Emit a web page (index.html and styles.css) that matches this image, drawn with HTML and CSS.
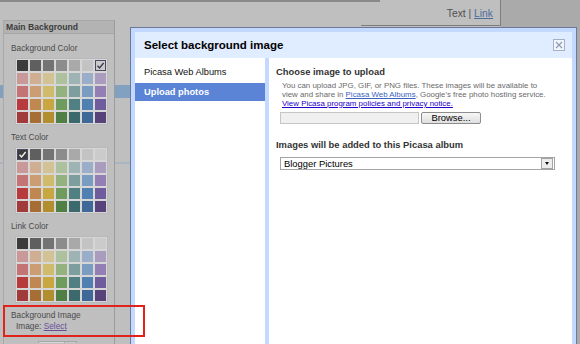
FILE: index.html
```html
<!DOCTYPE html>
<html lang="en">
<head>
  <meta charset="UTF-8" />
  <title>Template Designer - Background</title>
  <link rel="stylesheet" href="styles.css">
</head>
<body>

  <div class="page">
    <div class="sidebar">
      <div class="panel-title">Main Background</div>
      <div class="label">Background Color</div>
      <div class="swatches" data-selected="6"></div>
      <div class="label">Text Color</div>
      <div class="swatches" data-selected="0"></div>
      <div class="label">Link Color</div>
      <div class="swatches"></div>
      <div class="bg-image">
        <div>Background Image</div>
        <div class="bg-image-row">Image: <a href="#">Select</a></div>
      </div>
      <div class="pos-row"><span class="pos-box"></span><span class="pos-btn"></span></div>
    </div>

    <div class="main">
      <div class="main-head">
        <div class="tabs">Text | <a href="#">Link</a></div>
      </div>
    </div>

    <div class="preview"></div>
  </div>

  <div class="highlight"></div>

  <!-- Dialogo -->
  <div class="dialog">
    <div class="dialog-head">
      <h2>Select background image</h2>
      <span class="close">
        <svg width="8" height="8" viewBox="0 0 8 8"><path d="M1 1L7 7M7 1L1 7" stroke="#8d9bb5" stroke-width="1.2"/></svg>
      </span>
    </div>
    <div class="dialog-body">
      <ul class="nav">
        <li>Picasa Web Albums</li>
        <li class="active">Upload photos</li>
      </ul>
      <div class="upload">
        <h3>Choose image to upload</h3>
        <p class="note">You can upload JPG, GIF, or PNG files. These images will be available to<br>view and share in <a href="#">Picasa Web Albums</a>, Google's free photo hosting service.<br><a href="#" class="policy">View Picasa program policies and privacy notice.</a></p>
        <div class="file-row">
          <span class="file-box"></span>
          <button class="browse">Browse...</button>
        </div>
        <h3 class="album-title">Images will be added to this Picasa album</h3>
        <div class="album-select">
          <span>Blogger Pictures</span>
          <span class="arrow"></span>
        </div>
      </div>
    </div>
  </div>

  <script>
    const palette = [
      ['#3b3b3b', '#5f5f5f', '#737373', '#8c8c8c', '#a9a9a9', '#c3c3c3', '#cbcbcb'],
      ['#c9999a', '#cfae91', '#d3c394', '#adc19f', '#9eb4b4', '#9aaec9', '#a99cbf'],
      ['#c57476', '#cc9c72', '#d0bb6a', '#93b27e', '#7c9e9f', '#7b9cc1', '#937fb3'],
      ['#b73b3c', '#c08751', '#c8a640', '#6f9c5c', '#508082', '#5080b1', '#6f5c9c'],
      ['#a03a3b', '#a66d35', '#b18f2e', '#4f7f44', '#3c6a6c', '#3d6897', '#574279']
    ];

    document.querySelectorAll('.swatches').forEach(grid => {
      const selected = grid.dataset.selected;
      palette.forEach((row, r) => {
        row.forEach((color, c) => {
          const cell = document.createElement('div');
          cell.className = 'swatch';
          cell.style.background = color;
          if (r === 0 && String(c) === selected) {
            cell.classList.add('on');
            const stroke = c === 0 ? '#f2f2f2' : '#3c3a50';
            cell.innerHTML = '<svg width="9" height="9" viewBox="0 0 9 9"><path d="M1.5 4.8L3.6 7L7.6 2" fill="none" stroke="' + stroke + '" stroke-width="1.4"/></svg>';
          }
          grid.appendChild(cell);
        });
      });
    });
  </script>

</body>
</html>
```

FILE: styles.css
```css
body {
  margin: 0;
  font-family: "Liberation Sans", Arial, sans-serif;
  background-color: #bfbfbf;
  overflow: hidden;
}
.page {
  display: flex;
  height: 344px;
  overflow: hidden;
  background:
    linear-gradient(#8a8a8a, #8a8a8a) no-repeat 0 0 / 380px 2px,
    linear-gradient(#82a0bf, #82a0bf) no-repeat 0 85px / 100% 13px,
    linear-gradient(#a9b5c2, #a9b5c2) no-repeat 0 162px / 100% 2px,
    #bfbfbf;
}
.sidebar {
  box-sizing: border-box;
  width: 112px;
  margin: 20px 0 0 3px;
  overflow: hidden;
  background-color: #bfbfbf;
  border-left: 1px solid #a9a9a9;
  border-right: 1px solid #9c9c9c;
  color: #4a4a4a;
}
.panel-title {
  height: 12px;
  line-height: 12px;
  padding-left: 2px;
  background-color: #b3b3b3;
  border-top: 1px solid #a6a6a6;
  border-bottom: 1px solid #a6a6a6;
  font-size: 8.6px;
  font-weight: bold;
  color: #3d3d3d;
}
.label {
  margin-top: 8px;
  padding-left: 7px;
  line-height: 12px;
  font-size: 8.3px;
}
.swatches + .label {
  margin-top: 6px;
}
.swatches {
  display: grid;
  grid-template-columns: repeat(7, 11px);
  grid-auto-rows: 11px;
  gap: 2px;
  width: max-content;
  margin: 4px 0 0 11px;
  padding: 1px;
  background-color: #d6d6d6;
  border: 1px solid #b8b8b8;
}
.swatch {
  display: flex;
  align-items: center;
  justify-content: center;
}
.swatch.on {
  box-sizing: border-box;
  border: 1px solid #4b4862;
}
.bg-image {
  margin-top: 7px;
  padding-left: 7px;
  font-size: 8.3px;
  line-height: 11px;
}
.bg-image-row {
  padding-left: 5px;
}
.bg-image-row a {
  color: #6b4f9c;
}
.pos-row {
  display: flex;
  margin: 9px 0 0 34px;
}
.pos-box {
  width: 25px;
  height: 1px;
  background-color: #d9d9d9;
  border: 1px solid #a5a5a5;
  border-bottom: none;
}
.pos-btn {
  width: 11px;
  height: 1px;
  background-color: #c9c9c9;
  border: 1px solid #a5a5a5;
  border-left: none;
  border-bottom: none;
}
.main {
  width: 386px;
}
.main-head {
  display: flex;
  justify-content: flex-end;
}
.tabs {
  height: 26px;
  padding: 8px 7px 0 0;
  box-sizing: border-box;
  border-right: 1px solid #7d7d7d;
  border-bottom: 1px solid #7d7d7d;
  width: 140px;
  text-align: right;
  font-size: 10.3px;
  line-height: 12px;
  color: #505050;
}
.tabs a {
  color: #4d6d9b;
}
.preview {
  flex: 1;
  background-color: #aaaaaa;
}
.highlight {
  position: absolute;
  left: 3px;
  top: 305px;
  width: 142px;
  height: 32px;
  box-sizing: border-box;
  border: 2px solid #e2231a;
  z-index: 2;
}
.dialog {
  position: absolute;
  left: 130px;
  top: 27px;
  width: 447px;
  height: 317px;
  box-sizing: border-box;
  padding: 4px 4px 0;
  border: 1px solid #6b7a98;
  border-bottom: none;
  background-color: #c3d9ff;
  display: flex;
  flex-direction: column;
  z-index: 1;
}
.dialog-head {
  display: flex;
  align-items: center;
  justify-content: space-between;
  height: 26px;
  padding: 0 7px 0 9px;
  background-color: #e0ecff;
}
.dialog-head h2 {
  margin: 0;
  font-size: 11.5px;
  color: #000;
}
.close {
  display: flex;
  align-items: center;
  justify-content: center;
  width: 10px;
  height: 10px;
  border: 1px solid #a3b0c8;
  background-color: #f1f5fd;
}
.dialog-body {
  flex: 1;
  display: flex;
  background-color: #fff;
}
.nav {
  list-style: none;
  margin: 0;
  padding: 5px 0 0;
  width: 130px;
  border-right: 4px solid #c3d9ff;
  font-size: 9.3px;
}
.nav li {
  height: 18px;
  line-height: 18px;
  margin-bottom: 2px;
  padding-left: 9px;
  color: #111;
}
.nav li.active {
  background-color: #5b84d7;
  color: #fff;
  font-weight: bold;
}
.upload {
  flex: 1;
  padding: 8px 0 0 7px;
}
.upload h3 {
  margin: 0;
  font-size: 9.4px;
  line-height: 12px;
  color: #333;
}
.note {
  margin: 2.5px 0 0 6px;
  font-size: 7.9px;
  line-height: 9px;
  color: #6a6a6a;
}
.note a {
  color: #3a62c0;
}
.note a.policy {
  color: #2200cc;
}
.file-row {
  display: flex;
  gap: 2px;
  margin: 4.5px 0 0 4px;
}
.file-box {
  width: 139px;
  height: 12px;
  box-sizing: border-box;
  border: 1px solid #c6c6c6;
  background-color: #f0f0f0;
}
.browse {
  width: 60px;
  height: 12px;
  padding: 0;
  border: 1px solid #8d8d8d;
  border-radius: 2px;
  background: linear-gradient(#f7f7f7, #dedede);
  font-family: inherit;
  font-size: 9.4px;
  line-height: 10px;
  color: #000;
}
.album-title {
  margin-top: 15px !important;
}
.album-select {
  display: flex;
  align-items: center;
  justify-content: space-between;
  width: 275px;
  height: 13px;
  box-sizing: border-box;
  margin: 6px 0 0 4px;
  padding: 0 1px 0 3px;
  border: 1px solid #a4a4a4;
  font-size: 9.4px;
  color: #000;
}
.arrow {
  display: flex;
  align-items: center;
  justify-content: center;
  width: 10px;
  height: 9px;
  border: 1px solid #a4a4a4;
  background-color: #ededed;
}
.arrow::after {
  content: "";
  border-left: 2.5px solid transparent;
  border-right: 2.5px solid transparent;
  border-top: 3px solid #111;
}
```
